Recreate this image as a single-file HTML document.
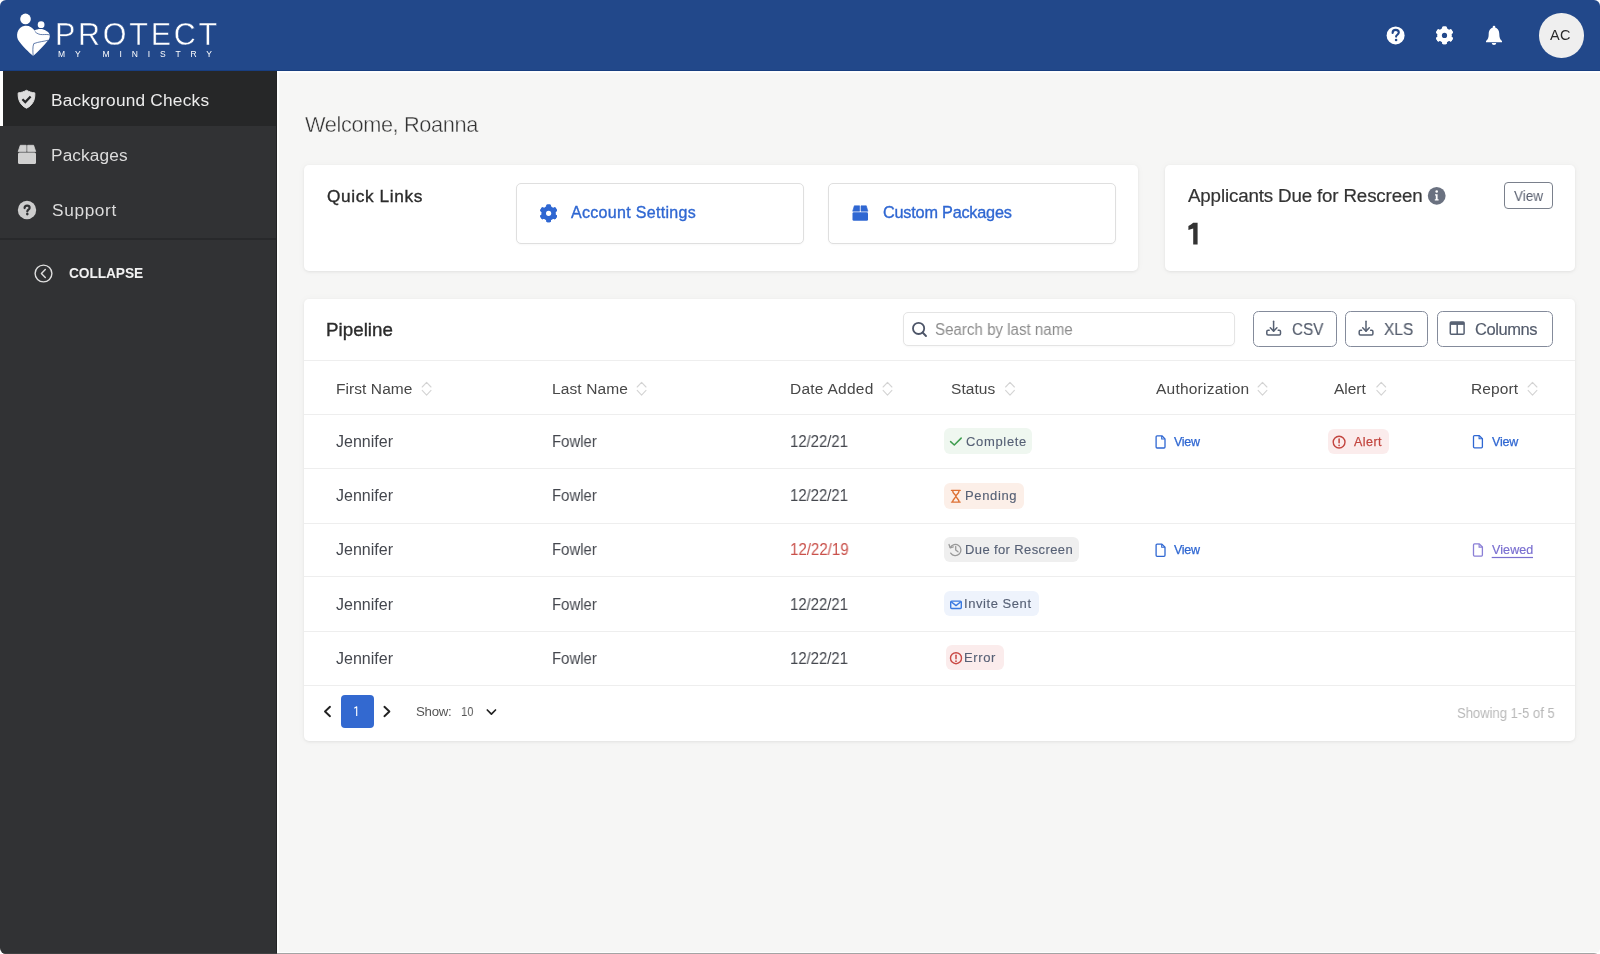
<!DOCTYPE html>
<html><head><meta charset="utf-8">
<style>
*{box-sizing:border-box;margin:0;padding:0}
html,body{width:1600px;height:954px;overflow:hidden;background:#ffffff}
body{font-family:"Liberation Sans",sans-serif;color:#333;position:relative}
.a{position:absolute}
svg{position:absolute;overflow:visible}
#frame{position:absolute;left:0;top:0;width:1600px;height:954px;border-radius:6px;overflow:hidden;background:#f6f6f5}
.t{position:absolute;white-space:nowrap;line-height:1;will-change:transform}
.card{position:absolute;background:#fff;border-radius:5px;box-shadow:0 1px 3px rgba(0,0,0,0.07),0 0 8px rgba(0,0,0,0.03)}
.btn{position:absolute;background:#fff;border:1.6px solid #dfdfdf;border-radius:5px;box-shadow:0 1px 2px rgba(0,0,0,0.03)}
.obtn{position:absolute;background:#fff;border:1.5px solid #848b9b;border-radius:5.5px}
.hl{position:absolute;height:1px;background:#eeeeee}
.badge{position:absolute;border-radius:6px}
</style></head>
<body>
<div id="frame">
<!-- header -->
<div class="a" style="left:0;top:0;width:1600px;height:71px;background:#22488a"></div>
<div class="a" style="left:0;top:69.5px;width:1600px;height:1.5px;background:#183e80"></div>
<!-- sidebar -->
<div class="a" style="left:0;top:71px;width:277px;height:883px;background:#313234"></div>
<div class="a" style="left:0;top:71px;width:277px;height:55px;background:#262728"></div>
<div class="a" style="left:0;top:71px;width:3px;height:55px;background:#ffffff"></div>
<div class="a" style="left:0;top:238px;width:277px;height:1.5px;background:#28292b"></div>
<div class="a" style="left:276px;top:71px;width:1px;height:883px;background:#222324"></div>
<div class="a" style="left:277px;top:71px;width:2px;height:883px;background:#fdfdfd"></div>
<div class="a" style="left:277px;top:71px;width:1323px;height:1.5px;background:#fdfdfd"></div>
<div class="a" style="left:277px;top:952px;width:1323px;height:1px;background:#fdfdfd"></div>
<div class="a" style="left:277px;top:953px;width:1323px;height:1px;background:#a4a4a4"></div>
<div class="a" style="left:0;top:953px;width:277px;height:1px;background:#404142"></div>
<!-- cards -->
<div class="card" style="left:304px;top:164.75px;width:834.25px;height:106px"></div>
<div class="card" style="left:1165px;top:164.5px;width:409.7px;height:106.3px"></div>
<div class="card" style="left:304px;top:298.5px;width:1270.5px;height:442.8px"></div>
<!-- quick link buttons -->
<div class="btn" style="left:515.6px;top:182.5px;width:288.65px;height:61.9px"></div>
<div class="btn" style="left:827.5px;top:182.5px;width:288.25px;height:61.75px"></div>
<!-- applicants view -->
<div class="obtn" style="left:1504.4px;top:182px;width:48.6px;height:27px;border-color:#7a808c;border-radius:4px"></div>
<!-- pipeline -->
<div class="hl" style="left:304px;top:360px;width:1270.5px"></div>
<div class="btn" style="left:902.5px;top:311.9px;width:332.1px;height:34.6px;border-color:#e4e4e4"></div>
<div class="obtn" style="left:1253px;top:311.25px;width:84px;height:36px"></div>
<div class="obtn" style="left:1345.3px;top:311.25px;width:82.8px;height:36px"></div>
<div class="obtn" style="left:1436.5px;top:311.25px;width:116.1px;height:36px"></div>
<!-- row dividers -->
<div class="hl" style="left:304px;top:414px;width:1270.5px"></div>
<div class="hl" style="left:304px;top:468px;width:1270.5px"></div>
<div class="hl" style="left:304px;top:523px;width:1270.5px"></div>
<div class="hl" style="left:304px;top:576px;width:1270.5px"></div>
<div class="hl" style="left:304px;top:631px;width:1270.5px"></div>
<div class="hl" style="left:304px;top:685px;width:1270.5px"></div>
<!-- badges -->
<div class="badge" style="left:944.2px;top:428.4px;width:88.3px;height:25.6px;background:#eff7f0"></div>
<div class="badge" style="left:944.2px;top:482.9px;width:79.4px;height:26.2px;background:#fcefe8"></div>
<div class="badge" style="left:944.1px;top:536.6px;width:134.8px;height:25.9px;background:#efefef"></div>
<div class="badge" style="left:944.1px;top:591.3px;width:94.7px;height:25.2px;background:#eef3fc"></div>
<div class="badge" style="left:946.3px;top:644.5px;width:57.6px;height:25.5px;background:#fbecec"></div>
<div class="badge" style="left:1328.2px;top:428.5px;width:60.4px;height:25.9px;background:#fbecec"></div>
<!-- pagination -->
<div class="a" style="left:341px;top:695px;width:32.75px;height:32.75px;background:#3369d0;border-radius:4px"></div>
<!-- avatar -->
<div class="a" style="left:1539.4px;top:13.4px;width:44.6px;height:44.6px;border-radius:50%;background:#efefef"></div>
<!--ICONS-->
<svg style="left:0;top:0" width="1600" height="954" viewBox="0 0 1600 954"><path d="M26.5 90.3 C28.8 91.6 31.5 92.6 34.8 92.9 C35.3 100.5 32 105.6 26.5 108.2 C21 105.6 17.7 100.5 18.2 92.9 C21.5 92.6 24.2 91.6 26.5 90.3Z" fill="#dedede" stroke="#dedede" stroke-width="1" stroke-linejoin="round"/>
<path d="M22.4 99.2 L25.3 102.1 L30.6 96.6" fill="none" stroke="#262728" stroke-width="2.2"/>
<path d="M20.3 145.3 H26.2 V151.6 H18.2 Z" fill="#d0d0d0" stroke="#d0d0d0" stroke-width="0.8" stroke-linejoin="round"/>
<path d="M27.6 145.3 H33.6 L35.7 151.6 H27.6 Z" fill="#d0d0d0" stroke="#d0d0d0" stroke-width="0.8" stroke-linejoin="round"/>
<rect x="18" y="152.5" width="18" height="11.5" rx="1.5" fill="#d0d0d0"/>
<circle cx="27" cy="210" r="9.2" fill="#cdcdcd"/>
<path d="M24.6 208.1 C24.6 206.5 25.7 205.7 27.1 205.7 C28.5 205.7 29.6 206.6 29.6 207.9 C29.6 209.6 27.3 209.8 27.3 211.4" fill="none" stroke="#313234" stroke-width="2.2" stroke-linecap="round"/>
<circle cx="27.3" cy="214.1" r="1.3" fill="#313234"/>
<circle cx="43.5" cy="273.5" r="8.4" fill="none" stroke="#dedede" stroke-width="1.4"/>
<path d="M45.3 269.4 L41.4 273.5 L45.3 277.6" fill="none" stroke="#dedede" stroke-width="1.4" stroke-linecap="round" stroke-linejoin="round"/>
<g transform="translate(12 10)"><circle cx="13.5" cy="8.9" r="5.3" fill="#fff"/>
<circle cx="29.1" cy="14.7" r="3.4" fill="#fff"/>
<path d="M21.2 46.1 C17 42.5 10.5 36 7.2 31.5 C3.2 27 4.8 16.6 13 15.7 C17.5 15.3 20.5 17.5 22.6 20.6 C25 19.2 28.5 18.6 31.5 19.6 C34.5 20.8 37.6 22.8 37.8 25.3 C38 27.8 37 29.6 36 30.6 C32 36 26 41.5 21.2 46.1 Z" fill="#fff"/>
<path d="M22.8 21.3 C24.5 23.5 27.5 24.8 30.5 24.6 C33 24.6 35.5 24.2 37.8 25" fill="none" stroke="#22488a" stroke-width="0.7"/>
<path d="M36.3 30.2 C32 31.5 27 31.6 21.8 33.6 C20.5 36.5 20.8 42 21.2 46" fill="none" stroke="#22488a" stroke-width="0.7"/>
</g>
<circle cx="1395.6" cy="35.4" r="9" fill="#fff"/>
<path d="M1392.6 33 C1392.6 30.8 1394 29.9 1395.7 29.9 C1397.5 29.9 1398.8 31 1398.8 32.6 C1398.8 34.7 1396.1 34.8 1396.1 36.6" fill="none" stroke="#22488a" stroke-width="2.1" stroke-linecap="round"/>
<circle cx="1396.1" cy="40" r="1.3" fill="#22488a"/>
<path d="M1494 27.5 C1497.6 27.5 1499.3 30.5 1499.3 34 C1499.3 37.5 1500 39.3 1502 41 V42.2 H1486 V41 C1488 39.3 1488.7 37.5 1488.7 34 C1488.7 30.5 1490.4 27.5 1494 27.5Z" fill="#fff"/>
<rect x="1492.7" y="25.8" width="2.6" height="3.5" rx="1.2" fill="#fff"/>
<path d="M1491.8 43 H1496.2 C1496.2 44.3 1495.2 45 1494 45 C1492.8 45 1491.8 44.3 1491.8 43Z" fill="#fff"/>
<path d="M854.3 205.8 H859.6 V211.2 H852.7 Z" fill="#2f67d2" stroke="#2f67d2" stroke-width="0.6" stroke-linejoin="round"/>
<path d="M861 205.8 H866.3 L867.9 211.2 H861 Z" fill="#2f67d2" stroke="#2f67d2" stroke-width="0.6" stroke-linejoin="round"/>
<rect x="852.5" y="212.2" width="15.5" height="8.6" rx="1.3" fill="#2f67d2"/>
<circle cx="1436.7" cy="195.8" r="8.9" fill="#6a7180"/>
<circle cx="1436.7" cy="191.5" r="1.3" fill="#fff"/>
<path d="M1435 194.2 H1437.6 V199.3 H1438.6 V200.6 H1434.8 V199.3 H1435.8 V195.5 H1435 Z" fill="#fff"/>
<circle cx="918.6" cy="328.4" r="5.6" fill="none" stroke="#4d5568" stroke-width="1.8"/>
<path d="M922.6 332.5 L926 336" stroke="#4d5568" stroke-width="1.9" stroke-linecap="round"/>
<path d="M1269.2 330.2 H1268.2 C1267.3 330.2 1266.8 330.8 1266.8 331.6 V333.8 C1266.8 334.6 1267.3 335 1268.1 335 H1279.3 C1280.1 335 1280.5 334.6 1280.5 333.8 V331.6 C1280.5 330.8 1280 330.2 1279.2 330.2 H1278.2" fill="none" stroke="#566072" stroke-width="1.5" stroke-linejoin="round" stroke-linecap="round"/>
<path d="M1273.6 321.3 V331" stroke="#566072" stroke-width="1.5" stroke-linecap="round"/>
<path d="M1270.3 327.8 L1273.6 331.1 L1276.9 327.8" fill="none" stroke="#566072" stroke-width="1.5" stroke-linecap="round" stroke-linejoin="round"/>
<path d="M1361.6000000000001 330.2 H1360.6000000000001 C1359.7 330.2 1359.2 330.8 1359.2 331.6 V333.8 C1359.2 334.6 1359.7 335 1360.5 335 H1371.7 C1372.5 335 1372.9 334.6 1372.9 333.8 V331.6 C1372.9 330.8 1372.4 330.2 1371.6000000000001 330.2 H1370.6000000000001" fill="none" stroke="#566072" stroke-width="1.5" stroke-linejoin="round" stroke-linecap="round"/>
<path d="M1366.0 321.3 V331" stroke="#566072" stroke-width="1.5" stroke-linecap="round"/>
<path d="M1362.7 327.8 L1366.0 331.1 L1369.3000000000002 327.8" fill="none" stroke="#566072" stroke-width="1.5" stroke-linecap="round" stroke-linejoin="round"/>
<rect x="1450.3" y="322.1" width="13.8" height="12.1" rx="1" fill="none" stroke="#566072" stroke-width="1.5"/>
<rect x="1450.3" y="322.1" width="13.8" height="2.8" fill="#566072"/>
<path d="M1457.2 324 V334" stroke="#566072" stroke-width="1.5"/>
<path d="M422.20000000000005 387 L426.6 382.3 L431.0 387 M422.20000000000005 390.4 L426.6 395.1 L431.0 390.4" fill="none" stroke="#d4d4d4" stroke-width="1.1" stroke-linecap="round" stroke-linejoin="round"/>
<path d="M637.2 387 L641.6 382.3 L646.0 387 M637.2 390.4 L641.6 395.1 L646.0 390.4" fill="none" stroke="#d4d4d4" stroke-width="1.1" stroke-linecap="round" stroke-linejoin="round"/>
<path d="M883.1 387 L887.5 382.3 L891.9 387 M883.1 390.4 L887.5 395.1 L891.9 390.4" fill="none" stroke="#d4d4d4" stroke-width="1.1" stroke-linecap="round" stroke-linejoin="round"/>
<path d="M1005.6 387 L1010 382.3 L1014.4 387 M1005.6 390.4 L1010 395.1 L1014.4 390.4" fill="none" stroke="#d4d4d4" stroke-width="1.1" stroke-linecap="round" stroke-linejoin="round"/>
<path d="M1258.1 387 L1262.5 382.3 L1266.9 387 M1258.1 390.4 L1262.5 395.1 L1266.9 390.4" fill="none" stroke="#d4d4d4" stroke-width="1.1" stroke-linecap="round" stroke-linejoin="round"/>
<path d="M1376.85 387 L1381.25 382.3 L1385.65 387 M1376.85 390.4 L1381.25 395.1 L1385.65 390.4" fill="none" stroke="#d4d4d4" stroke-width="1.1" stroke-linecap="round" stroke-linejoin="round"/>
<path d="M1528.1 387 L1532.5 382.3 L1536.9 387 M1528.1 390.4 L1532.5 395.1 L1536.9 390.4" fill="none" stroke="#d4d4d4" stroke-width="1.1" stroke-linecap="round" stroke-linejoin="round"/>
<path d="M950.6 441.6 L954.3 445 L961.2 438.1" fill="none" stroke="#3f9d4f" stroke-width="1.5" stroke-linecap="round" stroke-linejoin="round"/>
<path d="M951.5 490.4 H960.2 M951.5 502.1 H960.2 M952.6 490.4 C952.6 493.5 955.9 495 955.9 496.3 C955.9 497.6 952.6 499 952.6 502.1 M959.1 490.4 C959.1 493.5 955.9 495 955.9 496.3 C955.9 497.6 959.1 499 959.1 502.1" fill="none" stroke="#dd7236" stroke-width="1.4" stroke-linecap="round"/>
<path d="M950.3 547.5 A5.6 5.6 0 1 1 950.7 553.1" fill="none" stroke="#999" stroke-width="1.3" stroke-linecap="round"/>
<path d="M949 544.5 L950.2 547.8 L953.3 546.9" fill="none" stroke="#999" stroke-width="1.3" stroke-linecap="round" stroke-linejoin="round"/>
<path d="M955.7 546.5 V549.9 L958 551.8" fill="none" stroke="#999" stroke-width="1.3" stroke-linecap="round" stroke-linejoin="round"/>
<rect x="950.7" y="601.1" width="10.6" height="7.4" rx="1" fill="none" stroke="#3a79e0" stroke-width="1.4"/>
<path d="M951.2 601.8 L956 605.6 L960.8 601.8" fill="none" stroke="#3a79e0" stroke-width="1.4" stroke-linejoin="round"/>
<circle cx="956" cy="658.2" r="5.5" fill="none" stroke="#c94a46" stroke-width="1.4"/>
<path d="M956 655.2 V658.7" stroke="#c94a46" stroke-width="1.5" stroke-linecap="round"/>
<circle cx="956" cy="661.2" r="0.85" fill="#c94a46"/>
<circle cx="1339.1" cy="442.1" r="5.9" fill="none" stroke="#c2453f" stroke-width="1.4"/>
<path d="M1339.1 438.9 V442.8" stroke="#c2453f" stroke-width="1.5" stroke-linecap="round"/>
<circle cx="1339.1" cy="445.3" r="0.85" fill="#c2453f"/>
<path d="M1156.1000000000001 436.8 C1156.1000000000001 436.20000000000005 1156.5 435.8 1157.1000000000001 435.8 H1161.9 L1165.0 438.90000000000003 V447.0 C1165.0 447.6 1164.6000000000001 448.0 1164.0 448.0 H1157.1000000000001 C1156.5 448.0 1156.1000000000001 447.6 1156.1000000000001 447.0 Z" fill="none" stroke="#2f67d2" stroke-width="1.3" stroke-linejoin="round"/>
<path d="M1161.7 436.0 V439.0 H1164.8000000000002" fill="none" stroke="#2f67d2" stroke-width="1.1"/>
<path d="M1156.1000000000001 545.1 C1156.1000000000001 544.5 1156.5 544.1 1157.1000000000001 544.1 H1161.9 L1165.0 547.1999999999999 V555.3 C1165.0 555.9 1164.6000000000001 556.3 1164.0 556.3 H1157.1000000000001 C1156.5 556.3 1156.1000000000001 555.9 1156.1000000000001 555.3 Z" fill="none" stroke="#2f67d2" stroke-width="1.3" stroke-linejoin="round"/>
<path d="M1161.7 544.3 V547.3 H1164.8000000000002" fill="none" stroke="#2f67d2" stroke-width="1.1"/>
<path d="M1473.5 436.59999999999997 C1473.5 436.0 1473.8999999999999 435.59999999999997 1474.5 435.59999999999997 H1479.3 L1482.3999999999999 438.7 V446.79999999999995 C1482.3999999999999 447.4 1482.0 447.79999999999995 1481.3999999999999 447.79999999999995 H1474.5 C1473.8999999999999 447.79999999999995 1473.5 447.4 1473.5 446.79999999999995 Z" fill="none" stroke="#2f67d2" stroke-width="1.3" stroke-linejoin="round"/>
<path d="M1479.1 435.79999999999995 V438.79999999999995 H1482.2" fill="none" stroke="#2f67d2" stroke-width="1.1"/>
<path d="M1473.5 544.9000000000001 C1473.5 544.3000000000001 1473.8999999999999 543.9000000000001 1474.5 543.9000000000001 H1479.3 L1482.3999999999999 547.0 V555.1 C1482.3999999999999 555.7 1482.0 556.1 1481.3999999999999 556.1 H1474.5 C1473.8999999999999 556.1 1473.5 555.7 1473.5 555.1 Z" fill="none" stroke="#8a7fd6" stroke-width="1.3" stroke-linejoin="round"/>
<path d="M1479.1 544.1 V547.1 H1482.2" fill="none" stroke="#8a7fd6" stroke-width="1.1"/>
<rect x="1491.7" y="556.9" width="41.3" height="1.2" fill="#7a6fd0"/>
<path d="M330 706.8 L325 711.5 L330 716.2" fill="none" stroke="#222" stroke-width="1.9" stroke-linecap="round" stroke-linejoin="round"/>
<path d="M384.4 706.8 L389.4 711.5 L384.4 716.2" fill="none" stroke="#222" stroke-width="1.9" stroke-linecap="round" stroke-linejoin="round"/>
<path d="M487.3 710 L491.4 714.2 L495.5 710" fill="none" stroke="#222" stroke-width="1.7" stroke-linecap="round" stroke-linejoin="round"/>
<path d="M1193.2 222.7 H1197.6 V244.6 H1193.2 V228.6 L1188.4 230 V226.1 C1190.3 225.2 1191.8 224 1193.2 222.7 Z" fill="#333"/>
<path d="M354.3 708.3 L356.7 706.8 V716" fill="none" stroke="#fff" stroke-width="1.15" stroke-linejoin="round"/>
<circle cx="1444.5" cy="35.4" r="7.3" fill="#fff"/>
<rect x="1442.20" y="26.50" width="4.6" height="17.8" rx="1.3" fill="#fff" transform="rotate(0.0 1444.5 35.4)"/>
<rect x="1442.20" y="26.50" width="4.6" height="17.8" rx="1.3" fill="#fff" transform="rotate(60.0 1444.5 35.4)"/>
<rect x="1442.20" y="26.50" width="4.6" height="17.8" rx="1.3" fill="#fff" transform="rotate(120.0 1444.5 35.4)"/>
<rect x="1442.20" y="26.50" width="4.6" height="17.8" rx="1.3" fill="#fff" transform="rotate(180.0 1444.5 35.4)"/>
<rect x="1442.20" y="26.50" width="4.6" height="17.8" rx="1.3" fill="#fff" transform="rotate(240.0 1444.5 35.4)"/>
<rect x="1442.20" y="26.50" width="4.6" height="17.8" rx="1.3" fill="#fff" transform="rotate(300.0 1444.5 35.4)"/>
<circle cx="1444.5" cy="35.4" r="2.6" fill="#22488a"/>
<circle cx="548.6" cy="213.3" r="7.2" fill="#2f67d2"/>
<rect x="546.30" y="204.40" width="4.6" height="17.8" rx="1.3" fill="#2f67d2" transform="rotate(0.0 548.6 213.3)"/>
<rect x="546.30" y="204.40" width="4.6" height="17.8" rx="1.3" fill="#2f67d2" transform="rotate(60.0 548.6 213.3)"/>
<rect x="546.30" y="204.40" width="4.6" height="17.8" rx="1.3" fill="#2f67d2" transform="rotate(120.0 548.6 213.3)"/>
<rect x="546.30" y="204.40" width="4.6" height="17.8" rx="1.3" fill="#2f67d2" transform="rotate(180.0 548.6 213.3)"/>
<rect x="546.30" y="204.40" width="4.6" height="17.8" rx="1.3" fill="#2f67d2" transform="rotate(240.0 548.6 213.3)"/>
<rect x="546.30" y="204.40" width="4.6" height="17.8" rx="1.3" fill="#2f67d2" transform="rotate(300.0 548.6 213.3)"/>
<circle cx="548.6" cy="213.3" r="2.6" fill="#ffffff"/>
</svg>
<div class="t" style="left:50.80px;top:92.00px;font-size:17.25px;letter-spacing:0.228px;color:#ececec;">Background Checks</div>
<div class="t" style="left:50.80px;top:147.00px;font-size:17.25px;letter-spacing:0.124px;color:#dcdcdc;">Packages</div>
<div class="t" style="left:51.50px;top:202.00px;font-size:17.25px;letter-spacing:0.646px;color:#dcdcdc;">Support</div>
<div class="t" style="left:68.50px;top:267.00px;font-size:13.75px;letter-spacing:-0.099px;color:#f2f2f2;font-weight:bold;">COLLAPSE</div>
<div class="t" style="left:55.40px;top:19.00px;font-size:30.5px;letter-spacing:2.751px;color:#ffffff;-webkit-text-stroke:0.45px #22488a;">PROTECT</div>
<div class="t" style="left:57.50px;top:50.00px;font-size:8.5px;letter-spacing:9.860px;color:#ffffff;">MY MINISTRY</div>
<div class="t" style="left:1550.00px;top:28.00px;font-size:14.5px;letter-spacing:0.329px;color:#2a2a2a;">AC</div>
<div class="t" style="left:305.25px;top:114.00px;font-size:21.75px;letter-spacing:-0.377px;color:#333333;-webkit-text-stroke:0.4px #f6f6f5;">Welcome, Roanna</div>
<div class="t" style="left:327.25px;top:188.00px;font-size:17.25px;letter-spacing:0.612px;color:#2b2b2b;-webkit-text-stroke:0.35px currentColor;">Quick Links</div>
<div class="t" style="left:571.25px;top:205.00px;font-size:16.0px;letter-spacing:0.312px;color:#2f67d2;-webkit-text-stroke:0.35px currentColor;">Account Settings</div>
<div class="t" style="left:883.25px;top:204.00px;font-size:16.25px;letter-spacing:-0.214px;color:#2f67d2;-webkit-text-stroke:0.35px currentColor;">Custom Packages</div>
<div class="t" style="left:1188.30px;top:187.00px;font-size:18.75px;letter-spacing:-0.155px;color:#333333;-webkit-text-stroke:0.2px currentColor;">Applicants Due for Rescreen</div>
<div class="t" style="left:1513.80px;top:189.00px;font-size:14.5px;letter-spacing:0.000px;color:#5a6070;transform:scaleX(0.9276);transform-origin:0 0;">View</div>
<div class="t" style="left:326.00px;top:321.00px;font-size:18.75px;letter-spacing:0.030px;color:#2b2b2b;-webkit-text-stroke:0.35px currentColor;">Pipeline</div>
<div class="t" style="left:935.25px;top:322.00px;font-size:16.0px;letter-spacing:0.000px;color:#8c8c8c;transform:scaleX(0.9438);transform-origin:0 0;">Search by last name</div>
<div class="t" style="left:1291.50px;top:321.00px;font-size:16.5px;letter-spacing:0.000px;color:#535b6b;-webkit-text-stroke:0.15px currentColor;transform:scaleX(0.9227);transform-origin:0 0;">CSV</div>
<div class="t" style="left:1383.80px;top:321.00px;font-size:16.5px;letter-spacing:0.000px;color:#535b6b;-webkit-text-stroke:0.15px currentColor;transform:scaleX(0.9364);transform-origin:0 0;">XLS</div>
<div class="t" style="left:1475.40px;top:321.00px;font-size:16.5px;letter-spacing:-0.426px;color:#535b6b;-webkit-text-stroke:0.15px currentColor;">Columns</div>
<div class="t" style="left:335.60px;top:381.00px;font-size:15.5px;letter-spacing:0.071px;color:#474747;">First Name</div>
<div class="t" style="left:551.70px;top:381.00px;font-size:15.5px;letter-spacing:0.121px;color:#474747;">Last Name</div>
<div class="t" style="left:789.50px;top:381.00px;font-size:15.5px;letter-spacing:0.250px;color:#474747;">Date Added</div>
<div class="t" style="left:950.50px;top:381.00px;font-size:15.5px;letter-spacing:0.062px;color:#474747;">Status</div>
<div class="t" style="left:1155.50px;top:381.00px;font-size:15.5px;letter-spacing:0.221px;color:#474747;">Authorization</div>
<div class="t" style="left:1333.75px;top:381.00px;font-size:15.5px;letter-spacing:-0.016px;color:#474747;">Alert</div>
<div class="t" style="left:1471.00px;top:381.00px;font-size:15.5px;letter-spacing:0.107px;color:#474747;">Report</div>
<div class="t" style="left:336.25px;top:434.00px;font-size:16.0px;letter-spacing:0.022px;color:#44474e;">Jennifer</div>
<div class="t" style="left:551.87px;top:434.00px;font-size:16.0px;letter-spacing:0.000px;color:#44474e;transform:scaleX(0.9312);transform-origin:0 0;">Fowler</div>
<div class="t" style="left:789.87px;top:434.00px;font-size:16.0px;letter-spacing:0.000px;color:#44474e;transform:scaleX(0.9286);transform-origin:0 0;">12/22/21</div>
<div class="t" style="left:336.25px;top:488.00px;font-size:16.0px;letter-spacing:0.022px;color:#44474e;">Jennifer</div>
<div class="t" style="left:551.87px;top:488.00px;font-size:16.0px;letter-spacing:0.000px;color:#44474e;transform:scaleX(0.9312);transform-origin:0 0;">Fowler</div>
<div class="t" style="left:789.87px;top:488.00px;font-size:16.0px;letter-spacing:0.000px;color:#44474e;transform:scaleX(0.9286);transform-origin:0 0;">12/22/21</div>
<div class="t" style="left:336.25px;top:542.00px;font-size:16.0px;letter-spacing:0.022px;color:#44474e;">Jennifer</div>
<div class="t" style="left:551.87px;top:542.00px;font-size:16.0px;letter-spacing:0.000px;color:#44474e;transform:scaleX(0.9312);transform-origin:0 0;">Fowler</div>
<div class="t" style="left:789.86px;top:542.00px;font-size:16.0px;letter-spacing:0.000px;color:#c9504a;transform:scaleX(0.9400);transform-origin:0 0;">12/22/19</div>
<div class="t" style="left:336.25px;top:597.00px;font-size:16.0px;letter-spacing:0.022px;color:#44474e;">Jennifer</div>
<div class="t" style="left:551.87px;top:597.00px;font-size:16.0px;letter-spacing:0.000px;color:#44474e;transform:scaleX(0.9312);transform-origin:0 0;">Fowler</div>
<div class="t" style="left:789.87px;top:597.00px;font-size:16.0px;letter-spacing:0.000px;color:#44474e;transform:scaleX(0.9286);transform-origin:0 0;">12/22/21</div>
<div class="t" style="left:336.25px;top:651.00px;font-size:16.0px;letter-spacing:0.022px;color:#44474e;">Jennifer</div>
<div class="t" style="left:551.87px;top:651.00px;font-size:16.0px;letter-spacing:0.000px;color:#44474e;transform:scaleX(0.9312);transform-origin:0 0;">Fowler</div>
<div class="t" style="left:789.87px;top:651.00px;font-size:16.0px;letter-spacing:0.000px;color:#44474e;transform:scaleX(0.9286);transform-origin:0 0;">12/22/21</div>
<div class="t" style="left:965.60px;top:435.00px;font-size:13.0px;letter-spacing:0.670px;color:#566075;-webkit-text-stroke:0.12px currentColor;">Complete</div>
<div class="t" style="left:964.60px;top:489.00px;font-size:13.0px;letter-spacing:0.637px;color:#566075;-webkit-text-stroke:0.12px currentColor;">Pending</div>
<div class="t" style="left:964.70px;top:543.00px;font-size:13.0px;letter-spacing:0.383px;color:#566075;-webkit-text-stroke:0.12px currentColor;">Due for Rescreen</div>
<div class="t" style="left:964.30px;top:597.00px;font-size:13.0px;letter-spacing:0.559px;color:#566075;-webkit-text-stroke:0.12px currentColor;">Invite Sent</div>
<div class="t" style="left:964.30px;top:651.00px;font-size:13.0px;letter-spacing:0.610px;color:#566075;-webkit-text-stroke:0.12px currentColor;">Error</div>
<div class="t" style="left:1174.40px;top:436.00px;font-size:12.5px;letter-spacing:-0.280px;color:#2f67d2;-webkit-text-stroke:0.25px currentColor;">View</div>
<div class="t" style="left:1174.40px;top:544.00px;font-size:12.5px;letter-spacing:-0.280px;color:#2f67d2;-webkit-text-stroke:0.25px currentColor;">View</div>
<div class="t" style="left:1353.70px;top:436.00px;font-size:12.5px;letter-spacing:0.468px;color:#c2453f;-webkit-text-stroke:0.25px currentColor;">Alert</div>
<div class="t" style="left:1491.70px;top:436.00px;font-size:12.5px;letter-spacing:-0.214px;color:#2f67d2;-webkit-text-stroke:0.25px currentColor;">View</div>
<div class="t" style="left:1491.70px;top:544.00px;font-size:12.5px;letter-spacing:0.096px;color:#7a6fd0;-webkit-text-stroke:0.2px currentColor;">Viewed</div>
<div class="t" style="left:415.60px;top:705.00px;font-size:13.25px;letter-spacing:-0.286px;color:#555555;">Show:</div>
<div class="t" style="left:461.39px;top:705.00px;font-size:13.25px;letter-spacing:0.000px;color:#555555;transform:scaleX(0.8602);transform-origin:0 0;">10</div>
<div class="t" style="left:1457.10px;top:705.00px;font-size:15.0px;letter-spacing:0.000px;color:#b8b8b8;transform:scaleX(0.8679);transform-origin:0 0;">Showing 1-5 of 5</div>
</div>
</body></html>
